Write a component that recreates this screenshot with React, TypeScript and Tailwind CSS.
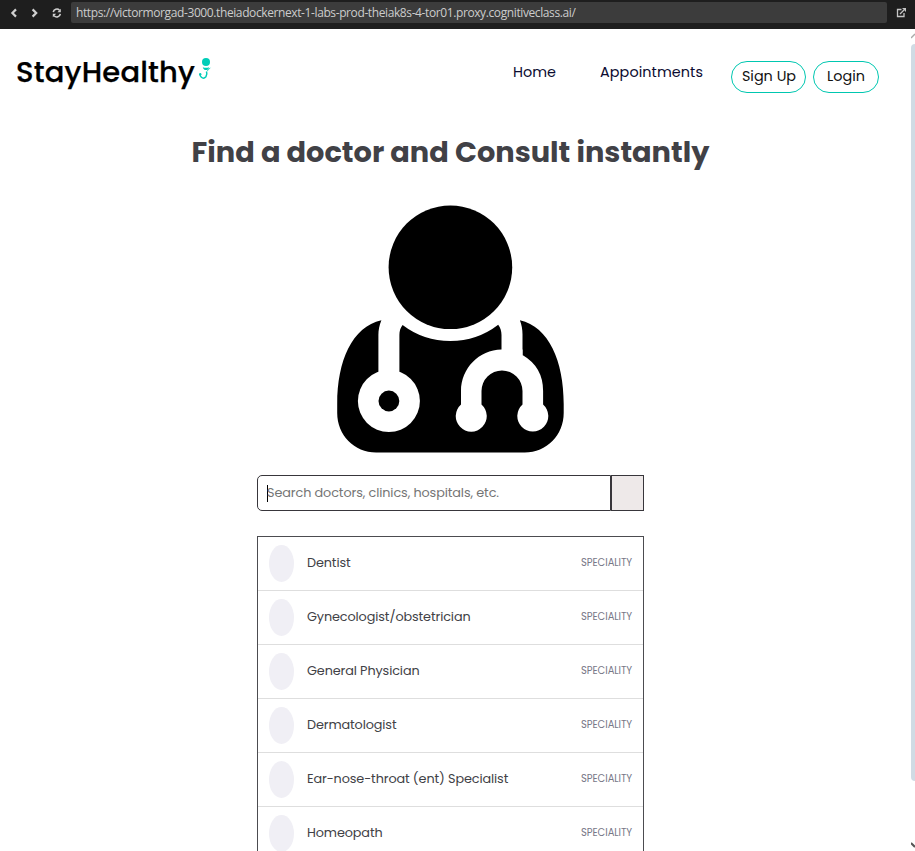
const specialities = [
  'Dentist',
  'Gynecologist/obstetrician',
  'General Physician',
  'Dermatologist',
  'Ear-nose-throat (ent) Specialist',
  'Homeopath',
];

function BrowserBar() {
  return (
    <div className="flex h-[29px] shrink-0 items-start bg-[#1e1e1e] font-['Open_Sans','Noto_Sans',sans-serif] text-[#cccccc]">
      <svg className="mt-[5px] ml-2 h-4 w-[56px] shrink-0" viewBox="0 0 56 16" fill="none" stroke="#d0d0d0">
        <path d="M8 4.4 4.4 8l3.6 3.6M24.6 4.4 28.2 8l-3.600 3.600" strokeWidth="2.2" />
        <path d="M45.3 7.2a3.6 3.6 0 0 1 6.2-2M52.3 8.800a3.600 3.600 0 0 1-6.200 2" strokeWidth="1.6" />
        <path d="M52.800 3.800v3.400h-3.400zM44.800 12.200V8.800h3.400z" fill="#d0d0d0" stroke="none" />
      </svg>
      <div className="mt-[2px] ml-[7px] flex h-[21px] w-[816px] items-center rounded-[2px] bg-[#3c3c3c] pl-[5px] text-[12px] whitespace-nowrap">
        <span className="tracking-[-0.395px]">https://victormorgad-3000.theiadockernext-1-labs-prod-theiak8s-4-tor01.proxy.cognitiveclass.ai/</span>
      </div>
      <svg className="mt-[7px] ml-[9px] h-[11px] w-[11px]" viewBox="0 0 11 11" fill="none" stroke="#c5c5c5">
        <path d="M5.500 2.500h-4v7h6.500v-3.500M4 7l4-4" strokeWidth="1.300" />
        <path d="M6 1h4v4z" fill="#c5c5c5" stroke="none" />
      </svg>
    </div>
  );
}

function LogoMark() {
  return (
    <svg className="mt-[29px] ml-[3px] mr-px h-[23px] w-[14px]" viewBox="0 0 14 23" fill="#00cdb8">
      <circle cx="8" cy="4" r="4" />
      <path d="M4.800 9.200q3.300 1 6.400 0-.6 2.800-3.200 2.800T4.800 9.200z" />
      <path d="M12.300 9.800 9 13.200" fill="none" stroke="#00cdb8" strokeWidth=".8" />
      <path d="M8.500 13.500q1 3-.6 5.300-2.200 2.500-4.500.5-1.200-1-1.500-2.800" fill="none" stroke="#00cdb8" strokeWidth="1.500" />
      <circle cx="2.200" cy="16.300" r="1.200" />
    </svg>
  );
}

function Header() {
  return (
    <nav className="flex h-[91px] w-[900px] shrink-0 items-start pl-4">
      <div className="w-[179px] pt-[21px] text-[29px] leading-[44px] font-medium tracking-[0.2px] whitespace-nowrap text-black [-webkit-text-stroke:0.25px_black]">StayHealthy</div>
      <LogoMark />
      <a className="mt-[31px] ml-[300px] w-[87px] text-[14.4px] leading-6 whitespace-nowrap text-[#0b0b30]">Home</a>
      <a className="mt-[31px] w-[131px] text-[14.4px] leading-6 tracking-[0.08px] whitespace-nowrap text-[#0b0b30]">Appointments</a>
      <button className="mt-8 flex h-8 w-[75px] items-center justify-center rounded-2xl border border-[#00c7b0] pl-px text-[14.4px] whitespace-nowrap text-[#111]">Sign Up</button>
      <button className="mt-8 ml-[7px] flex h-8 w-[66px] items-center justify-center rounded-2xl border border-[#00c7b0] text-[14.4px] whitespace-nowrap text-[#111]">Login</button>
    </nav>
  );
}

function DoctorIcon() {
  return (
    <svg className="mt-8 h-[248px] w-[227px] shrink-0" viewBox="337 205 227 248">
      <circle cx="450.400" cy="267.300" r="61.800" />
      <path d="M381.400 320.300C352 327 337.200 361 337.200 404v9c0 22 17 39.500 39 39.500h148.500c22 0 39-17.500 39-39.500v-9c0-43-14.800-77-43.800-83.700 1.800 5 2.600 9 2.600 14v20.800h-21v-20c0-4-1.100-7.500-3.300-10.300q-21 16.200-47.800 16.200T402.600 325c-2.200 2.700-3.200 6-3.200 10v20h-21v-20c0-5 .9-9.600 3-14.700z" />
      <g fill="#fff">
        <path d="M378.400 355h21v30h-21z" />
        <circle cx="388.900" cy="401" r="31" />
        <path d="M501.500 349.400h21v5.600q20.600 12 20.600 36v13.500a15.500 15.500 0 1 1-20.600 0V391a20.500 20.500 0 0 0-41 0v13.500a15.500 15.500 0 1 1-20.500 0V391c0-23 18-41 40.500-41.600z" />
      </g>
      <circle cx="388.900" cy="401" r="10.400" />
    </svg>
  );
}

function SearchBox() {
  return (
    <div className="mt-[22px] flex h-9 w-[387px] shrink-0">
      <div className="flex w-[354px] items-center rounded-l-[5px] border border-[#38363b] pl-[9px]">
        <span className="h-[17px] w-px bg-black" />
        <span className="-ml-px text-[12.8px] tracking-[-0.1px] whitespace-nowrap text-[#757575]">Search doctors, clinics, hospitals, etc.</span>
      </div>
      <button className="w-[33px] border border-[#38363b] bg-[#eee9e9]" />
    </div>
  );
}

function SpecialityList() {
  return (
    <ul className="mt-[25px] h-[340px] w-[387px] shrink-0 border border-[#4c4c50]">
      {specialities.map((name) => (
        <li key={name} className="flex h-[54px] items-center border-b border-[#dedede] px-[11px]">
          <span className="-mt-px h-[37px] w-[25px] rounded-[50%] bg-[#f0eff5]" />
          <span className="ml-[13px] pb-px text-[12.8px] tracking-[-0.11px] whitespace-nowrap text-[#414146]">{name}</span>
          <span className="ml-auto w-[51px] pb-[3px] text-[10px] tracking-[-0.06px] whitespace-nowrap text-[#787887]">SPECIALITY</span>
        </li>
      ))}
    </ul>
  );
}

export default function App() {
  return (
    <div className="relative flex h-[851px] w-[915px] flex-col overflow-hidden bg-white font-['Poppins','Inter',sans-serif]">
      <BrowserBar />
      <Header />
      <main className="flex w-[901px] flex-col items-center">
        <h1 className="mt-3 text-[28.8px] leading-[41px] font-bold whitespace-nowrap text-[#414146]">Find a doctor and Consult instantly</h1>
        <DoctorIcon />
        <SearchBox />
        <SpecialityList />
      </main>
      <div className="absolute top-[29px] right-0 h-[822px] w-1 overflow-hidden">
        <svg className="h-[15px] w-1" viewBox="0 0 4 15" fill="none" stroke="#aaa" strokeWidth="1.500"><path d="m0 9 4-4" /></svg>
        <div className="h-[737px] rounded-l-sm bg-[#d0dbe4]" />
        <svg className="mt-[58px] h-3 w-1" viewBox="0 0 4 12" fill="none" stroke="#555" strokeWidth="2"><path d="m0 4 4 4" /></svg>
      </div>
    </div>
  );
}
